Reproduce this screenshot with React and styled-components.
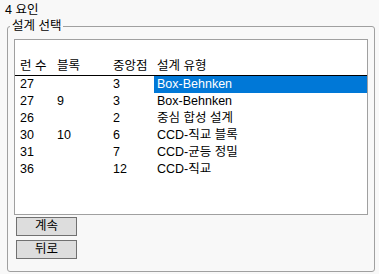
import React from 'react'
import styled, { createGlobalStyle } from 'styled-components'

const rows = [
  { runs: '27', blocks: '', center: '3', type: 'Box-Behnken', selected: true },
  { runs: '27', blocks: '9', center: '3', type: 'Box-Behnken' },
  { runs: '26', blocks: '', center: '2', type: '중심 합성 설계' },
  { runs: '30', blocks: '10', center: '6', type: 'CCD-직교 블록' },
  { runs: '31', blocks: '', center: '7', type: 'CCD-균등 정밀' },
  { runs: '36', blocks: '', center: '12', type: 'CCD-직교' },
]

export default function App() {
  return (
    <>
      <GlobalStyle />
      <Title>4 요인</Title>
      <Group>
        <Legend>설계 선택</Legend>
        <ListBox>
          <HeaderRow>
            <HeadCell>런 수</HeadCell>
            <HeadCell>블록</HeadCell>
            <HeadCell>중앙점</HeadCell>
            <HeadCell $last>설계 유형</HeadCell>
          </HeaderRow>
          {rows.map((r, i) => (
            <Row key={i}>
              <Cell>{r.runs}</Cell>
              <Cell>{r.blocks}</Cell>
              <Cell>{r.center}</Cell>
              <TypeCell $selected={r.selected}>{r.type}</TypeCell>
            </Row>
          ))}
        </ListBox>
        <Buttons>
          <Button>계속</Button>
          <Button>뒤로</Button>
        </Buttons>
      </Group>
    </>
  )
}

const GlobalStyle = createGlobalStyle`
  body {
    margin: 0;
    background: #f8f8f8;
    font-family: "Liberation Sans", "Noto Sans CJK KR", sans-serif;
    font-size: 12.5px;
    color: #000;
  }
`

const Title = styled.div`
  padding: 2px 0 0 5px;
  line-height: 16px;
`

const Group = styled.fieldset`
  margin: 1px 0 0 7px;
  width: 354px;
  padding: 6px 6px 12px 6px;
  border: 1px solid #a0a0a0;
  border-radius: 3px;
`

const Legend = styled.legend`
  margin-left: -4px;
  padding: 0 2px;
  line-height: 14px;
`

const ListBox = styled.div`
  height: 174px;
  background: #fff;
  border: 1px solid #a0a0a0;
`

const gridCols = `
  display: grid;
  grid-template-columns: 37px 56px 41px 1fr;
  padding-left: 5px;
`

const HeaderRow = styled.div`
  ${gridCols}
  height: 34px;
  align-items: end;
  padding-bottom: 1px;
  border-bottom: 1px solid #000;
`

const HeadCell = styled.div`
  line-height: 16px;
  padding-left: ${p => (p.$last ? '3px' : '0')};
`

const Row = styled.div`
  ${gridCols}
  height: 17px;
  line-height: 17px;
`

const Cell = styled.div``

const TypeCell = styled.div`
  padding-left: 3px;
  background: ${p => (p.$selected ? '#0078d7' : 'transparent')};
  color: ${p => (p.$selected ? '#fff' : '#000')};
`

const Buttons = styled.div`
  display: flex;
  flex-direction: column;
  gap: 4px;
  margin: 2px 0 0 2px;
`

const Button = styled.button`
  width: 61px;
  height: 19px;
  padding: 0;
  background: #dddddd;
  border: 1px solid #707070;
  border-radius: 0;
  font: inherit;
  line-height: 15px;
  color: #000;
`
